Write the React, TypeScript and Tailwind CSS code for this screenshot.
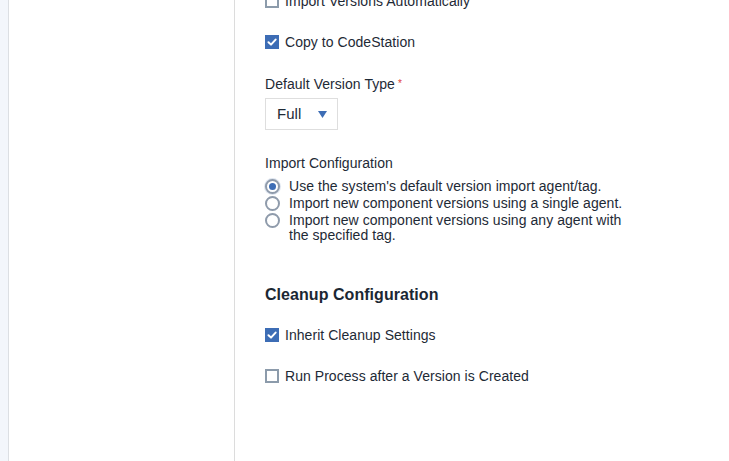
import React from "react";

function Check({ checked }: { checked: boolean }) {
  if (checked) {
    return (
      <span className="flex h-[14px] w-[14px] shrink-0 items-center justify-center bg-[#3d6db5]">
        <svg width="10" height="10" viewBox="0 0 10 10">
          <path d="M1.5 5.2 L4 7.6 L8.6 2.6" fill="none" stroke="#fff" strokeWidth="2" strokeLinecap="round" strokeLinejoin="round" />
        </svg>
      </span>
    );
  }
  return <span className="block h-[14px] w-[14px] shrink-0 border-2 border-[#8c9bab] bg-white" />;
}

function Radio({ checked }: { checked: boolean }) {
  return (
    <span
      className={
        "mt-[1px] flex h-[15px] w-[15px] shrink-0 items-center justify-center rounded-full border-2 bg-white " +
        (checked ? "border-[#8f9bab] shadow-[0_0_0_1px_#dfe6f0]" : "border-[#8f9bab]")
      }
    >
      {checked && <span className="block h-[7px] w-[7px] rounded-full bg-[#3d6db5]" />}
    </span>
  );
}

export default function App() {
  return (
    <div
      className="flex h-[461px] w-[729px] overflow-hidden bg-white text-[14px] tracking-[0.05px] text-[#1e2a36]"
      style={{ fontFamily: '"Liberation Sans", Arial, sans-serif' }}
    >
      <div className="w-[9px] shrink-0 border-r border-[#dcdfe3] bg-[#f3f6fb]" />
      <div className="w-[226px] shrink-0 border-r border-[#dcdcdc] bg-white" />
      <div className="flex flex-col pl-[30px]">
        <div className="mt-[-6px] flex items-center gap-[6px] leading-[14px]">
          <Check checked={false} />
          <span>Import Versions Automatically</span>
        </div>
        <div className="mt-[27px] flex items-center gap-[6px] leading-[14px]">
          <Check checked={true} />
          <span>Copy to CodeStation</span>
        </div>
        <div className="mt-[27px] flex items-center leading-[16px]">
          <span>Default Version Type</span>
          <span className="ml-[3px] text-[10px] leading-[10px] text-[#e0403a]">*</span>
        </div>
        <div className="mt-[6px] flex h-[32px] w-[73px] items-center border border-[#dedede] pl-[11px] text-[15px]">
          <span>Full</span>
          <svg className="ml-[17px]" width="9" height="7" viewBox="0 0 9 7">
            <path d="M0 0 H9 L4.5 7 Z" fill="#3d6db5" />
          </svg>
        </div>
        <div className="mt-[25px] leading-[16px]">Import Configuration</div>
        <div className="mt-[7px] flex flex-col leading-[17px]">
          <div className="flex gap-[9px]">
            <Radio checked={true} />
            <span>Use the system's default version import agent/tag.</span>
          </div>
          <div className="flex gap-[9px]">
            <Radio checked={false} />
            <span>Import new component versions using a single agent.</span>
          </div>
          <div className="flex gap-[9px]">
            <Radio checked={false} />
            <span className="w-[350px] pt-[1px] leading-[15px]">
              Import new component versions using any agent with the specified tag.
            </span>
          </div>
        </div>
        <div className="mt-[43px] text-[16px] font-bold leading-[18px] text-[#1b2733]">Cleanup Configuration</div>
        <div className="mt-[24px] flex items-center gap-[6px] leading-[14px]">
          <Check checked={true} />
          <span>Inherit Cleanup Settings</span>
        </div>
        <div className="mt-[27px] flex items-center gap-[6px] leading-[14px]">
          <Check checked={false} />
          <span>Run Process after a Version is Created</span>
        </div>
      </div>
    </div>
  );
}
